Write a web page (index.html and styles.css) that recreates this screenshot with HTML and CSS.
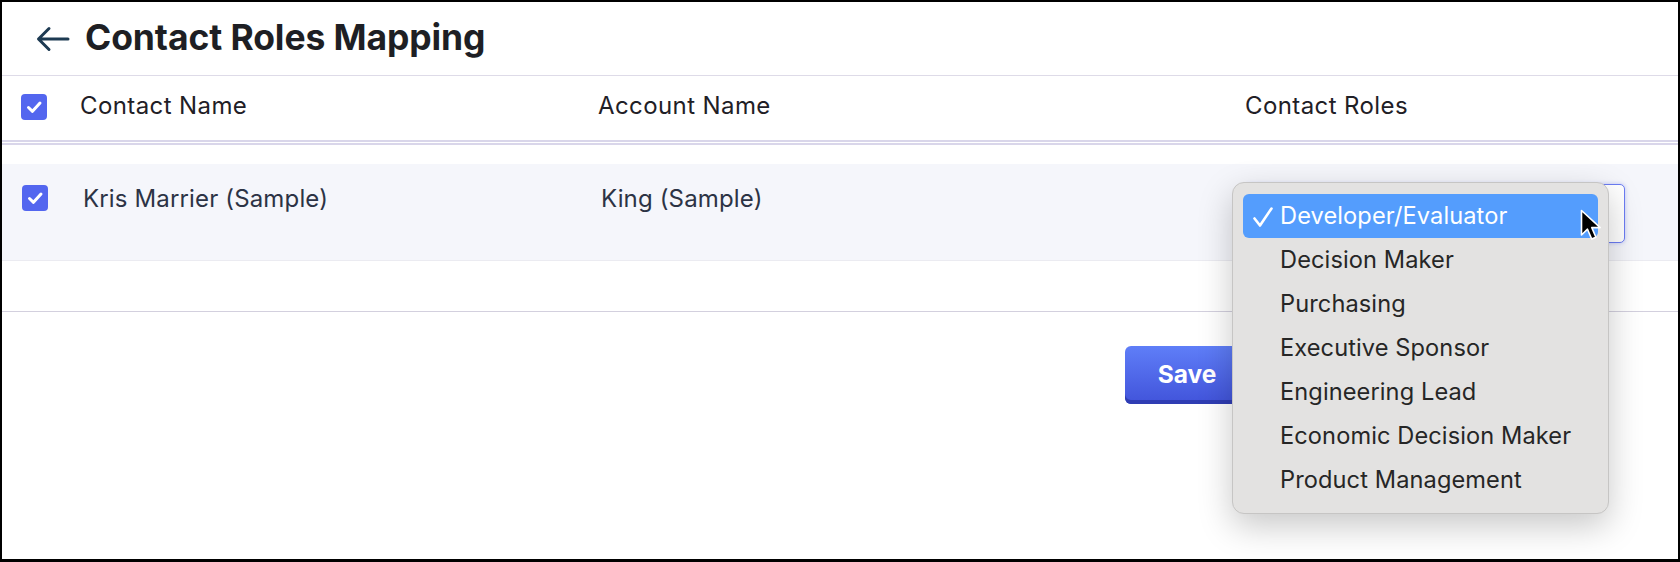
FILE: index.html
```html
<!DOCTYPE html>
<html>
<head>
	<meta charset="utf-8">
	<title>Contact Roles Mapping</title>
	<link rel="stylesheet" href="styles.css">
</head>
<body>
	<div class="frame">
		<header class="page-head">
			<svg class="back" width="34" height="26" viewBox="0 0 34 26" aria-hidden="true">
				<path d="M32 13H3M13 2.5L2.5 13L13 23.5" fill="none" stroke="#1d3a52" stroke-width="3" stroke-linecap="round" stroke-linejoin="round"/>
			</svg>
			<h1>Contact Roles Mapping</h1>
		</header>

		<div class="grid head-row">
			<span class="check"><svg viewBox="0 0 26 26"><path d="M7.5 13.5l4 3.8L19 9" fill="none" stroke="#fff" stroke-width="3" stroke-linecap="round" stroke-linejoin="round"/></svg></span>
			<span>Contact Name</span>
			<span>Account Name</span>
			<span>Contact Roles</span>
		</div>

		<div class="grid body-row">
			<span class="check"><svg viewBox="0 0 26 26"><path d="M7.5 13.5l4 3.8L19 9" fill="none" stroke="#fff" stroke-width="3" stroke-linecap="round" stroke-linejoin="round"/></svg></span>
			<span class="cell">Kris Marrier (Sample)</span>
			<span class="cell">King (Sample)</span>
			<span class="select"></span>
		</div>

		<div class="spacer"></div>

		<footer class="actions">
			<button class="btn-save">Save</button>
		</footer>

		<!-- native select popup, drawn open -->
		<ul class="menu">
			<li class="on"><svg class="tick" width="22" height="22" viewBox="0 0 22 22"><path d="M2.5 12.5l5.5 7L19.5 2.5" fill="none" stroke="#fff" stroke-width="2.6" stroke-linecap="round" stroke-linejoin="round"/></svg>Developer/Evaluator</li>
			<li>Decision Maker</li>
			<li>Purchasing</li>
			<li>Executive Sponsor</li>
			<li>Engineering Lead</li>
			<li>Economic Decision Maker</li>
			<li>Product Management</li>
		</ul>

		<svg class="pointer" width="22" height="34" viewBox="0 0 22 34" aria-hidden="true">
			<path d="M1.5 1.5V26l6-5.8 4.2 9.8 4.2-1.8-4.1-9.6h8.4z" fill="#000" stroke="#fff" stroke-width="1.6" stroke-linejoin="round"/>
		</svg>
	</div>
</body>
</html>
```

FILE: styles.css
```css
html {
	font: 24px/1.2 Inter, "Noto Sans", sans-serif;
	letter-spacing: .4px;
	color: #1f2026;
}

body {
	margin: 0;
}

.frame {
	position: relative;
	box-sizing: border-box;
	height: 562px;
	border: 2px solid #000;
	border-bottom-width: 3px;
	background: #fff;
	overflow: hidden;
}

.page-head {
	display: flex;
	align-items: center;
	gap: 15px;
	height: 73px;
	padding-left: 34px;
	border-bottom: 1px solid #dedbe8;
}

.page-head h1 {
	margin: 0;
	font-size: 35.5px;
	font-weight: 700;
	letter-spacing: -.1px;
	color: #1e1f24;
}

.back {
	display: block;
}

.grid {
	display: grid;
	grid-template-columns: 59px 518px 647px 1fr;
	padding-left: 19px;
}

.head-row {
	height: 64px;
	align-items: center;
	border-bottom: 5px double #d9d6ea;
	margin-bottom: 19px;
}

.head-row span {
	margin-top: -3px;
}

.check {
	display: block;
	width: 26px;
	height: 26px;
	border-radius: 4px;
	background: #5366ef;
}

.check svg {
	display: block;
	width: 26px;
	height: 26px;
}

.body-row {
	align-items: start;
	height: 97px;
	box-sizing: border-box;
	padding-top: 20px;
	background: #f5f6fb;
	border-bottom: 1px solid #ebebf1;
	color: #2c3345;
}

.body-row .check {
	margin-top: 1px;
	margin-left: 1px;
}

.cell {
	padding: 2px 0 0 3px;
	line-height: 26px;
	letter-spacing: .15px;
}

.select {
	box-sizing: border-box;
	width: 380px;
	height: 59px;
	border: 1px solid #6b7cf3;
	border-radius: 5px;
	background: #fff;
	box-shadow: 0 0 4px rgba(83, 102, 239, .35);
}

.spacer {
	height: 50px;
	border-bottom: 1px solid #d3d0de;
}

.actions {
	display: flex;
	padding: 34px 0 0 1123px;
}

.btn-save {
	width: 124px;
	height: 58px;
	border: 0;
	border-radius: 6px;
	background: linear-gradient(#5f7ef8, #4153da);
	box-shadow: inset 0 -4px 0 #2f3db3;
	color: #fff;
	font: 700 24.5px Inter, sans-serif;
	padding: 0 0 3px;
}

.menu {
	position: absolute;
	left: 1230px;
	top: 180px;
	width: 377px;
	height: 332px;
	box-sizing: border-box;
	margin: 0;
	padding: 11px 10px;
	list-style: none;
	background: #e3e2e1;
	border: 1px solid #c6c5c4;
	border-radius: 12px;
	box-shadow: 0 12px 34px rgba(0, 0, 0, .22);
	font: 23.6px/44px Inter, "Noto Sans", sans-serif;
	letter-spacing: .1px;
	color: #262626;
}

.menu li {
	height: 44px;
	padding-left: 37px;
	border-radius: 6px;
	position: relative;
}

.menu li.on {
	background: #549dfd;
	color: #fff;
}

.tick {
	position: absolute;
	left: 9px;
	top: 12px;
}

.pointer {
	position: absolute;
	left: 1578px;
	top: 207px;
}
```
